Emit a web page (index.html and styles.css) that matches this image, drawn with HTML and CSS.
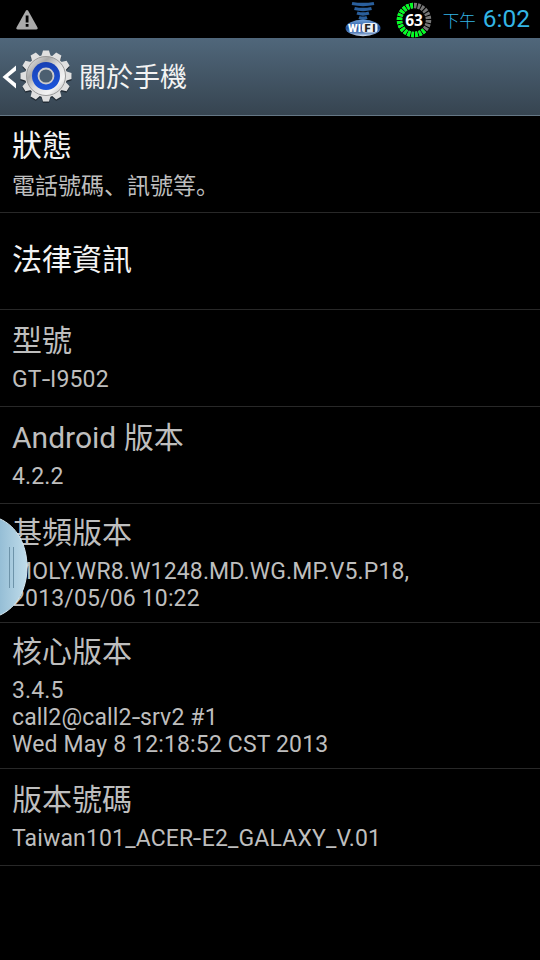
FILE: index.html
```html
<!DOCTYPE html>
<html lang="zh-Hant">
<head>
    <meta charset="UTF-8">
    <meta name="viewport" content="width=device-width, initial-scale=1.0">
    <title>關於手機</title>
    <link rel="stylesheet" href="styles.css">
</head>
<body>
    <!-- Status bar -->
    <div class="status-bar">
        <svg class="icon-warning" width="22" height="20" viewBox="0 0 22 20">
            <path d="M9.800 .8Q11 -.6 12.200 .8L21.500 17.500Q22 19.500 20 19.500H2Q0 19.500 .5 17.500Z" fill="#aaa"/>
            <path d="M9.700 5.500h2.800v7H9.700zM9.700 14h2.800v2.700H9.700z" fill="#000"/>
        </svg>
        <div class="status-right">
            <svg class="icon-wifi" width="36" height="36" viewBox="0 0 36 36">
                <defs>
                    <linearGradient id="wifi-oval" x1="0" y1="0" x2="0" y2="1">
                        <stop offset="0" stop-color="#6f9fd8"/>
                        <stop offset=".5" stop-color="#1f4f98"/>
                        <stop offset=".8" stop-color="#5f86bd"/>
                        <stop offset="1" stop-color="#dde8f5"/>
                    </linearGradient>
                </defs>
                <g fill="none" stroke="#2a5f9c" stroke-width="3.300">
                    <path d="M7 2.500Q18 4.500 29 2.500"/>
                    <path d="M9.500 7.500Q18 9.500 26.500 7.500"/>
                    <path d="M12 12Q18 14 24 12"/>
                    <path d="M14 16.500Q18 18 22 16.500"/>
                </g>
                <ellipse cx="18" cy="27" rx="17.500" ry="8.300" fill="url(#wifi-oval)"/>
                <rect x="17" y="22" width="15.500" height="9.500" rx="3" fill="#eef3f8"/>
                <text class="wifi-text" x="3" y="30.500" fill="#fff" textLength="13">WI</text>
                <text class="wifi-text" x="19.500" y="30.500" fill="#222" textLength="11">FI</text>
            </svg>
            <svg class="icon-battery" width="36" height="36" viewBox="0 0 36 36">
                <g fill="none" stroke-width="5.500">
                    <circle cx="18" cy="18" r="14.500" stroke="#777" pathLength="120" stroke-dasharray="3.600 1.400" transform="rotate(-90 18 18)"/>
                    <path d="M18 32.500A14.500 14.500 0 0 1 18 3.500" stroke="#0f2" pathLength="60" stroke-dasharray="3.600 1.400"/>
                    <path d="M28.250 28.250A14.500 14.500 0 0 1 18 32.500" stroke="#0f2" pathLength="15" stroke-dasharray="3.600 1.400"/>
                </g>
                <text class="battery-text" x="18" y="23.500" text-anchor="middle">63</text>
            </svg>
            <div class="clock"><span class="ampm">下午</span><span class="time">6:02</span></div>
        </div>
    </div>

    <!-- Action bar -->
    <header class="action-bar">
        <svg class="icon-back" width="16" height="24" viewBox="0 0 16 24">
            <path d="M15 .5V5.500L7 12L15 18.500V23.500L1.500 12Z" fill="#fff"/>
        </svg>
        <svg class="icon-gear" width="52" height="54" viewBox="-26 -26 52 54">
            <defs>
                <linearGradient id="metal" x1="0" y1="0" x2="1" y2="1">
                    <stop offset="0" stop-color="#f4f4f4"/>
                    <stop offset=".3" stop-color="#aaa"/>
                    <stop offset=".5" stop-color="#ddd"/>
                    <stop offset=".75" stop-color="#f4f4f4"/>
                    <stop offset="1" stop-color="#aaa"/>
                </linearGradient>
                <linearGradient id="blue" x1="0" y1="0" x2="0" y2="1">
                    <stop offset="0" stop-color="#1740b4"/>
                    <stop offset="1" stop-color="#1c56dc"/>
                </linearGradient>
                <g id="teeth">
                    <circle r="21"/>
                    <path id="tooth" d="M-5 -19L-3 -25.500H3L5 -19V19L3 25.500H-3L-5 19Z"/>
                    <use href="#tooth" transform="rotate(30)"/>
                    <use href="#tooth" transform="rotate(60)"/>
                    <use href="#tooth" transform="rotate(90)"/>
                    <use href="#tooth" transform="rotate(120)"/>
                    <use href="#tooth" transform="rotate(150)"/>
                </g>
            </defs>
            <use href="#teeth" y="1.500" fill="#222c36"/>
            <use href="#teeth" fill="#e0e0e0"/>
            <circle r="19.500" fill="url(#metal)" stroke="#999"/>
            <circle r="14" fill="url(#blue)"/>
            <circle r="7.500" fill="#4c5f70" stroke="#ccc" stroke-width="1.800"/>
        </svg>
        <h1>關於手機</h1>
    </header>

    <!-- Device info -->
    <ul class="pref-list">
        <li class="pref enabled">
            <h2>狀態</h2>
            <p>電話號碼<span class="punct" lang="zh-Hans">、</span>訊號等<span class="punct" lang="zh-Hans">。</span></p>
        </li>
        <li class="pref enabled">
            <h2>法律資訊</h2>
        </li>
        <li class="pref">
            <h2>型號</h2>
            <p>GT<span class="dash">-</span>I9502</p>
        </li>
        <li class="pref">
            <h2>Android 版本</h2>
            <p>4.2.2</p>
        </li>
        <li class="pref">
            <h2>基頻版本</h2>
            <p>MOLY.WR8.W1248.MD.WG.MP.V5.P18,<br>2013/05/06 10:22</p>
        </li>
        <li class="pref">
            <h2>核心版本</h2>
            <p>3.4.5<br>call2@call2<span class="dash">-</span>srv2 #1<br>Wed May 8 12:18:52 CST 2013</p>
        </li>
        <li class="pref">
            <h2>版本號碼</h2>
            <p>Taiwan101_ACER<span class="dash">-</span>E2_GALAXY_V.01</p>
        </li>
    </ul>

    <!-- Edge handle -->
    <svg class="edge-handle" width="28" height="100" viewBox="0 0 28 100">
        <defs>
            <linearGradient id="handle" x1="0" y1="0" x2="1" y2="0">
                <stop offset="0" stop-color="#94bdd5"/>
                <stop offset="1" stop-color="#c0dcea"/>
            </linearGradient>
        </defs>
        <path d="M-1 1.500C17 9 27 28 27 50S17 91 -1 98.500Z" fill="url(#handle)" stroke="#d5e8f1"/>
        <path d="M9.500 30v41M13.500 30v41" stroke="#6d93a9"/>
    </svg>
</body>
</html>
```

FILE: styles.css
```css
* {
    box-sizing: border-box;
    margin: 0;
    padding: 0;
}

body {
    position: relative;
    height: 960px;
    overflow: hidden;
    background-color: #000;
    color: #bebebe;
    font-family: Roboto, "Noto Sans CJK TC", sans-serif;
}

svg {
    display: block;
    flex: none;
}

.status-bar {
    display: flex;
    justify-content: space-between;
    height: 38px;
    padding: 0 10px 0 16px;
}

.icon-warning {
    margin-top: 10px;
}

.status-right {
    display: flex;
    align-items: center;
}

.icon-battery {
    margin: 2px 11px 0 15px;
}

.wifi-text {
    font-size: 11px;
    font-weight: 900;
}

.battery-text {
    font-family: "Open Sans", sans-serif;
    font-size: 15.500px;
    font-weight: 700;
    fill: #fff;
}

.clock {
    display: flex;
    align-items: baseline;
    padding-top: 3px;
    color: #33b5e5;
    line-height: 38px;
}

.ampm {
    margin-right: 7px;
    font-size: 16.500px;
    font-weight: 300;
}

.time {
    font-size: 24.500px;
}

.action-bar {
    display: flex;
    align-items: center;
    height: 78px;
    background: linear-gradient(#50677b, #364450);
    border-bottom: 1px solid #657785;
}

.icon-back {
    margin-left: 1px;
}

.icon-gear {
    margin: 1px 7px 0 3px;
}

h1 {
    padding-top: 2px;
    color: #f3f3f3;
    font-size: 27px;
    font-weight: 400;
    line-height: 40px;
}

.pref-list {
    list-style: none;
}

.pref {
    display: flex;
    flex-direction: column;
    justify-content: center;
    min-height: 97px;
    padding: 8.800px 12px 10.200px;
    border-bottom: 1px solid #282828;
}

.pref h2 {
    font-size: 30px;
    font-weight: 400;
    line-height: 40px;
}

.pref p {
    margin-top: 5px;
    font-size: 23px;
    line-height: 27px;
    letter-spacing: 0.150px;
}

.punct {
    font-family: "Noto Sans CJK SC", sans-serif;
}

/* wider hyphen */
.dash {
    display: inline-block;
    margin: 0 0.900px;
    transform: scaleX(1.350);
}

.enabled h2 {
    color: #f3f3f3;
}

.enabled p {
    letter-spacing: 0;
}

.edge-handle {
    position: absolute;
    left: 0;
    top: 517px;
}
```
